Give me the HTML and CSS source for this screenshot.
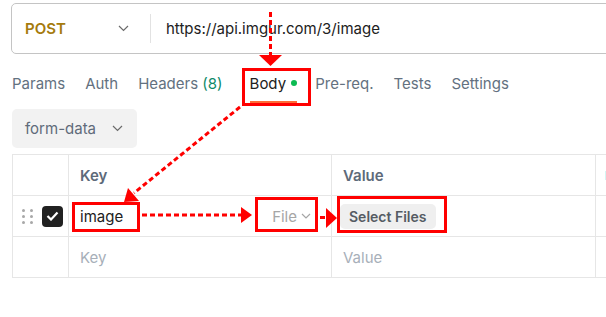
FILE: index.html
```html
<!DOCTYPE html>
<html lang="en">
<head>
    <meta charset="UTF-8">
    <meta name="viewport" content="width=device-width, initial-scale=1.0">
    <title>Request Body</title>
    <link rel="stylesheet" href="styles.css">
</head>
<body>
    <!-- Request bar -->
    <div class="request-bar">
        <div class="method">
            <span class="method-name">POST</span>
            <svg class="chevron" width="11" height="7" viewBox="0 0 11 7"><path d="M1 1l4.5 4.5L10 1" fill="none" stroke="#6b6b6b" stroke-width="1.2"/></svg>
        </div>
        <div class="divider"></div>
        <div class="url">https://api.imgur.com/3/image</div>
    </div>

    <!-- Tabs -->
    <nav class="tabs">
        <span class="tab">Params</span>
        <span class="tab">Auth</span>
        <span class="tab">Headers <span class="count">(8)</span></span>
        <span class="tab active">Body <span class="dot"></span></span>
        <span class="tab">Pre-req.</span>
        <span class="tab">Tests</span>
        <span class="tab">Settings</span>
    </nav>

    <!-- Body type -->
    <div class="body-type">
        <span>form-data</span>
        <svg class="chevron" width="11" height="7" viewBox="0 0 11 7"><path d="M1 1l4.5 4.5L10 1" fill="none" stroke="#6b6b6b" stroke-width="1.2"/></svg>
    </div>

    <!-- Key / value table -->
    <table class="kv-table">
        <colgroup>
            <col class="col-handle">
            <col class="col-key">
            <col class="col-value">
            <col class="col-extra">
        </colgroup>
        <tr class="head">
            <td></td>
            <td class="label">Key</td>
            <td class="label">Value</td>
            <td><span class="extra-mark"></span></td>
        </tr>
        <tr>
            <td>
                <div class="handle-cell">
                    <span class="grip">
                        <i></i><i></i><i></i><i></i><i></i><i></i>
                    </span>
                    <span class="checkbox">
                        <svg width="13" height="10" viewBox="0 0 13 10"><path d="M1.5 5l3.5 3.5L11.5 1.5" fill="none" stroke="#fff" stroke-width="2.2"/></svg>
                    </span>
                </div>
            </td>
            <td>
                <div class="key-cell">
                    <span class="key-text">image</span>
                    <span class="type-select">File
                        <svg width="10" height="6" viewBox="0 0 10 6"><path d="M1 1l4 4 4-4" fill="none" stroke="#a6a6a6" stroke-width="1.2"/></svg>
                    </span>
                </div>
            </td>
            <td><span class="select-files">Select Files</span></td>
            <td></td>
        </tr>
        <tr>
            <td></td>
            <td class="placeholder">Key</td>
            <td class="placeholder">Value</td>
            <td></td>
        </tr>
    </table>

    <!-- Annotation overlay -->
    <svg class="annotations" width="606" height="317" viewBox="0 0 606 317">
        <g fill="none" stroke="#ff0000" stroke-width="3">
            <rect x="243.5" y="69.5" width="66" height="35"/>
            <rect x="73.5" y="203.5" width="65" height="27"/>
            <rect x="256.5" y="198.5" width="60" height="32"/>
            <rect x="338.5" y="197.5" width="107" height="34"/>
        </g>
        <g fill="none" stroke="#ff0000" stroke-width="3" stroke-dasharray="5 3">
            <line x1="270.5" y1="12" x2="270.5" y2="56"/>
            <line x1="240" y1="107" x2="134" y2="193"/>
            <line x1="142" y1="215" x2="242" y2="215"/>
            <line x1="320" y1="217.5" x2="327" y2="217.5"/>
        </g>
        <g fill="#ff0000">
            <polygon points="259,55 282,55 270.5,66"/>
            <polygon points="124,202 139,201 128,188"/>
            <polygon points="241,207 241,223 252,215"/>
            <polygon points="326,208 326,228 337,218"/>
        </g>
    </svg>
</body>
</html>
```

FILE: styles.css
```css
body {
    font-family: Inter, "Noto Sans", sans-serif;
    font-size: 15px;
    margin: 0;
    width: 606px;
    height: 317px;
    overflow: hidden;
    position: relative;
    background-color: #ffffff;
    color: #212121;
}

.request-bar {
    display: flex;
    align-items: center;
    width: 640px;
    height: 49px;
    margin: 3px 0 0 11px;
    border: 1px solid #c4c4c4;
    border-radius: 5px;
}

.method {
    display: flex;
    align-items: center;
    width: 125px;
    padding-left: 13px;
}

.method-name {
    font-weight: 600;
    color: #a57b0d;
}

.method .chevron {
    margin-left: auto;
    margin-right: 21px;
}

.divider {
    width: 1px;
    height: 29px;
    background-color: #e2e2e2;
}

.url {
    padding-left: 15px;
    color: #212121;
}

.tabs {
    display: flex;
    margin: 14px 0 0 12px;
}

.tab {
    display: flex;
    align-items: center;
    height: 30px;
    padding-bottom: 3px;
    border-bottom: 2px solid transparent;
    margin-right: 20px;
    color: #637180;
    white-space: pre;
}

.tab .count {
    color: #0e8a6a;
}

.tab.active {
    color: #212121;
    border-bottom-color: #ff6c37;
    margin-left: 7px;
    margin-right: 18px;
}

.dot {
    display: inline-block;
    width: 6px;
    height: 6px;
    border-radius: 50%;
    background-color: #0cbb52;
    margin-left: 1px;
}

.body-type {
    display: flex;
    align-items: center;
    width: 112px;
    height: 39px;
    margin: 6px 0 0 12px;
    padding-left: 13px;
    border-radius: 5px;
    background-color: #f2f2f2;
    color: #5f6b7a;
}

.body-type .chevron {
    margin-left: auto;
    margin-right: 14px;
}

.kv-table {
    margin: 6px 0 0 12px;
    border-collapse: collapse;
    table-layout: fixed;
    width: 645px;
}

.col-handle { width: 56px; }
.col-key { width: 263px; }
.col-value { width: 264px; }
.col-extra { width: 62px; }

.kv-table td {
    height: 40px;
    padding: 0 0 0 11px;
    border: 1px solid #e6e6e6;
    vertical-align: middle;
}

.kv-table td:first-child {
    padding-left: 0;
}

.kv-table .label {
    font-weight: 600;
    color: #5d6a79;
}

.extra-mark {
    display: block;
    width: 2px;
    height: 9px;
    margin-left: -2px;
    background-color: #d4f6f4;
}

.handle-cell {
    display: flex;
    align-items: center;
    padding-left: 9px;
}

.grip {
    display: grid;
    grid-template-columns: 3px 3px;
    gap: 3px 5px;
}

.grip i {
    width: 3px;
    height: 3px;
    border-radius: 50%;
    background-color: #a8a8a8;
}

.checkbox {
    display: flex;
    align-items: center;
    justify-content: center;
    width: 21px;
    height: 21px;
    margin-left: 9px;
    border-radius: 4px;
    background-color: #212121;
}

.key-cell {
    display: flex;
    align-items: center;
}

.key-text {
    color: #212121;
}

.type-select {
    display: flex;
    align-items: center;
    gap: 4px;
    margin-left: auto;
    margin-right: 20px;
    color: #a6a6a6;
}

.select-files {
    display: inline-block;
    margin-left: -3px;
    padding: 4px 10px 4px 9px;
    border-radius: 5px;
    background-color: #efefef;
    font-size: 14px;
    font-weight: 600;
    color: #555b63;
}

.placeholder {
    color: #a7afb9;
}

.annotations {
    position: absolute;
    top: 0;
    left: 0;
    pointer-events: none;
}
```
